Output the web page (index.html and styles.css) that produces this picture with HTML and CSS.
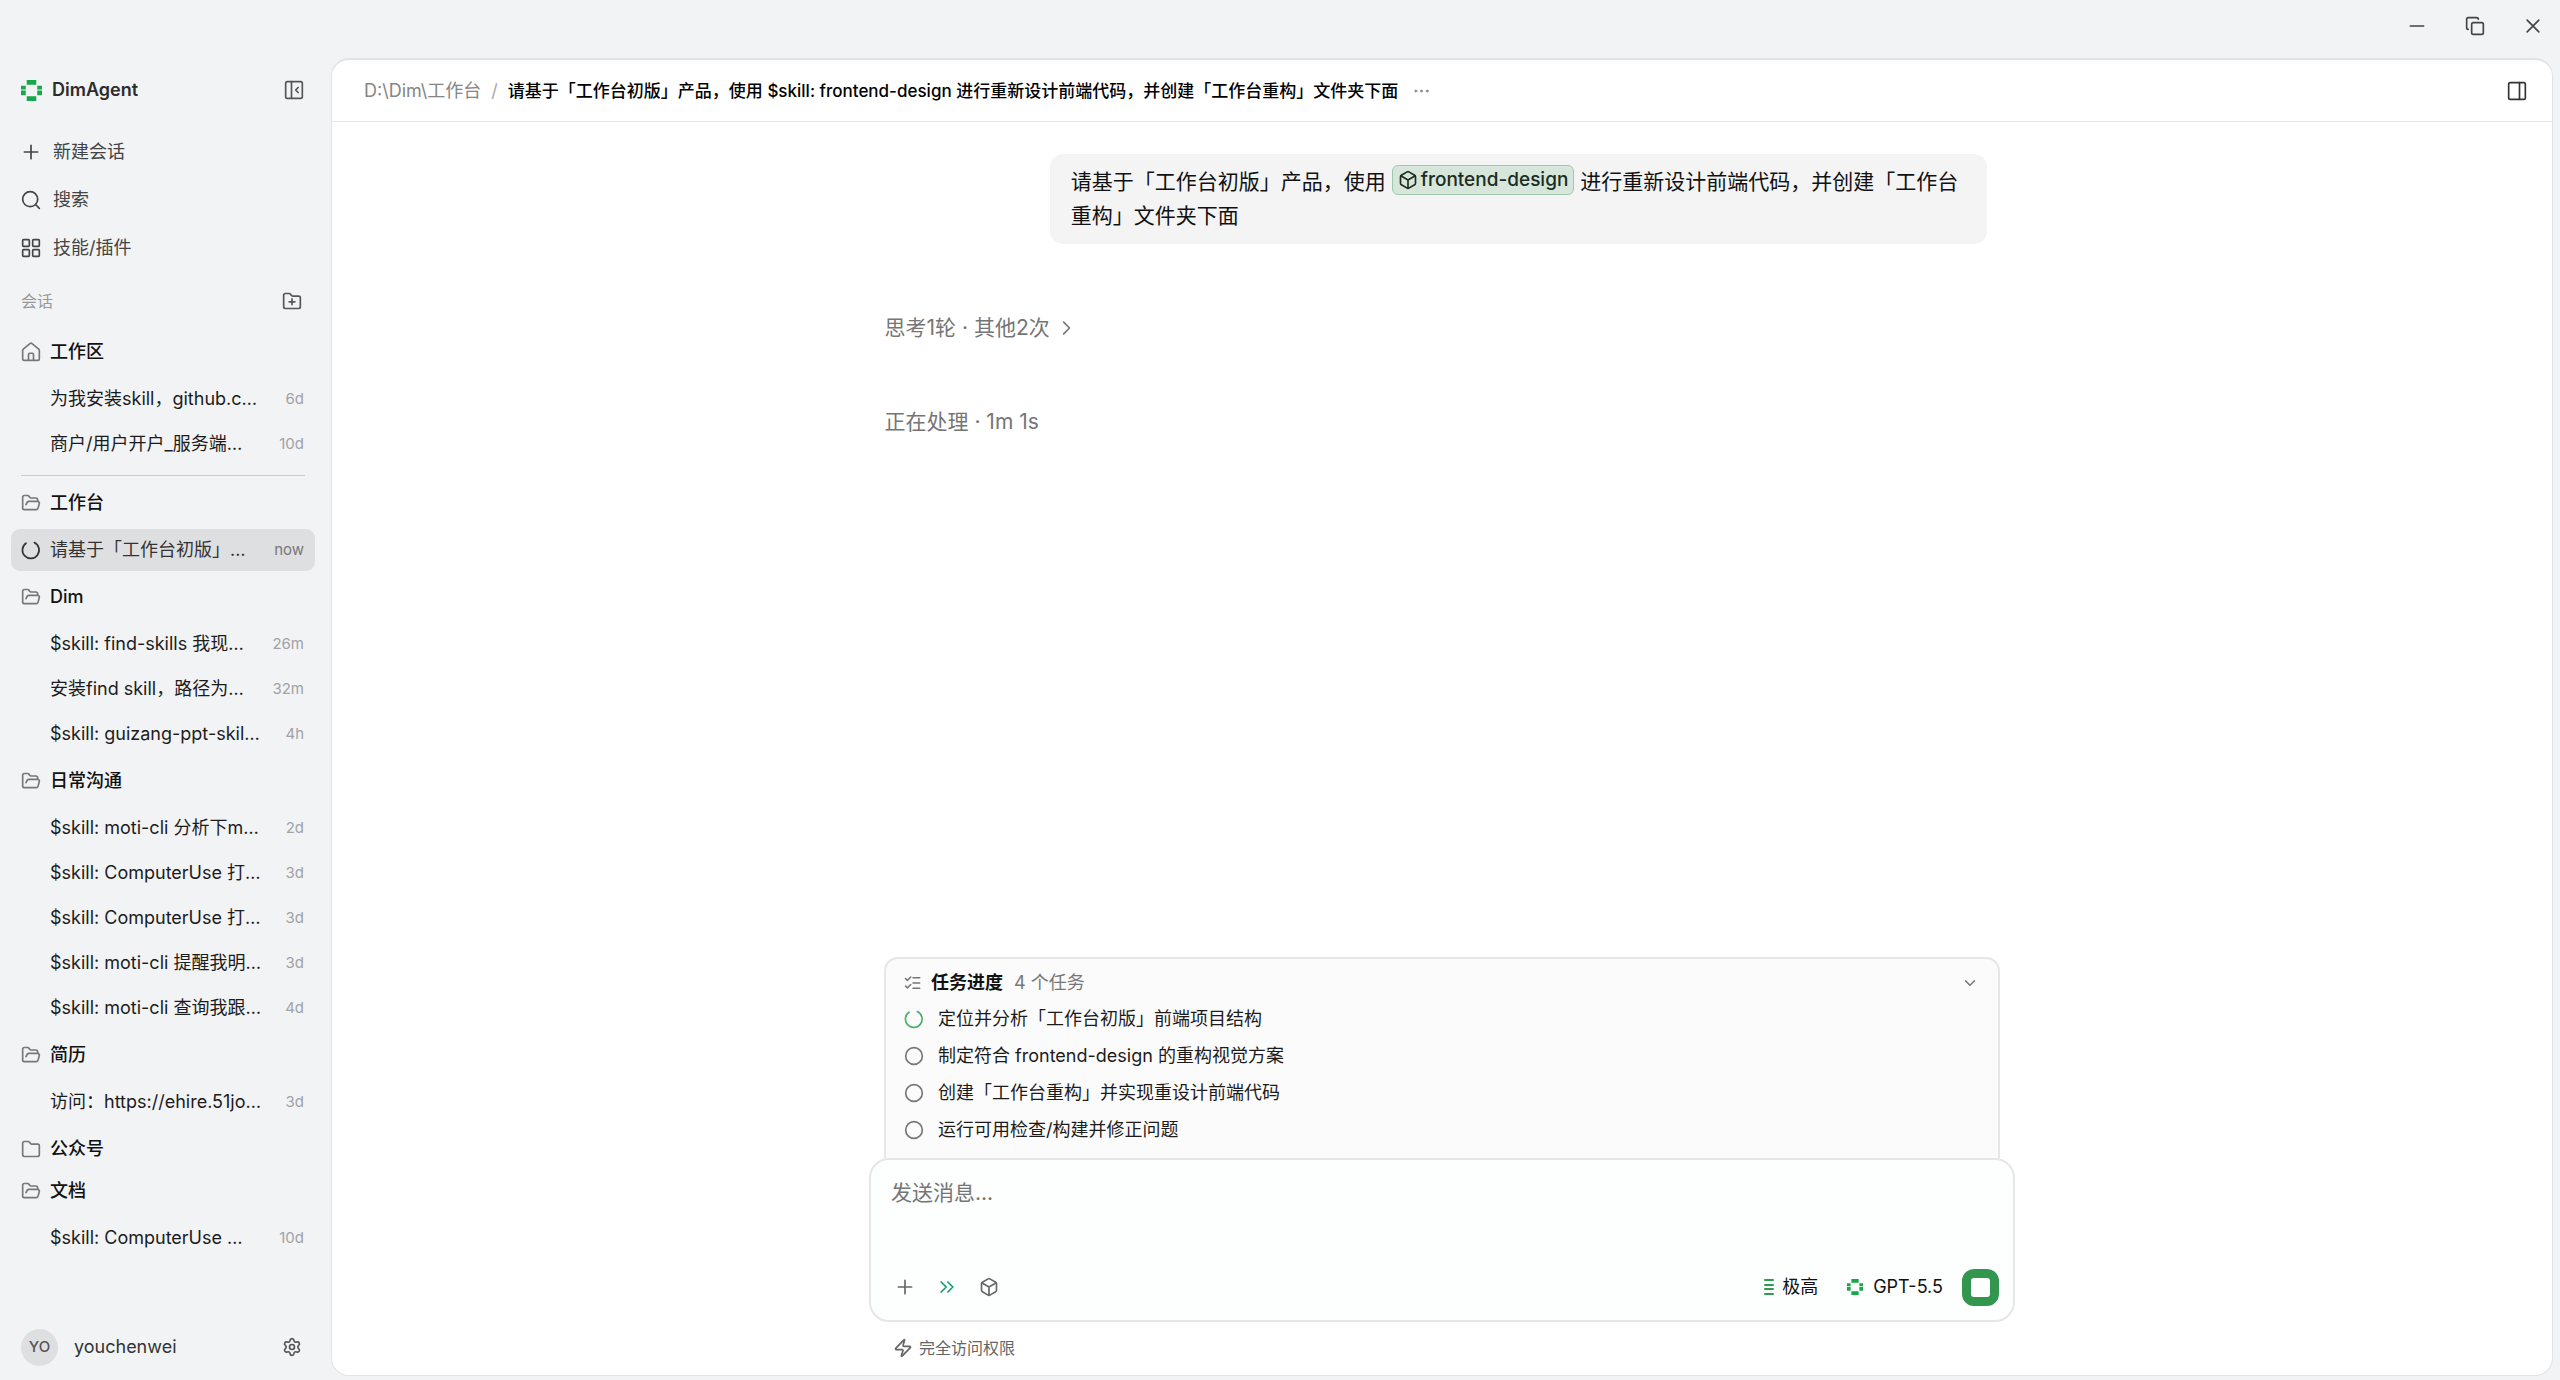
FILE: index.html
```html
<!DOCTYPE html>
<html lang="zh-CN">
<head>
    <meta charset="UTF-8">
    <meta name="viewport" content="width=device-width, initial-scale=1.0">
    <title>DimAgent</title>
    <link rel="stylesheet" href="styles.css">
</head>
<body>
    <!-- shared icons -->
    <svg class="sprite" aria-hidden="true">
        <symbol id="logo" viewBox="0 0 22 22">
            <path fill="#16a84a" d="M6 0h10v5H6zM6 17h10v5H6zM0 6h5v4H0zM0 11h5v5H0zM17 6h5v4h-5zM17 11h5v5h-5z"/>
        </symbol>
        <symbol id="plus" viewBox="0 0 24 24"><path d="M4 12h16M12 4v16"/></symbol>
        <symbol id="folder" viewBox="0 0 24 24">
            <path d="M2 19V5a2 2 0 0 1 2-2h4.6a2 2 0 0 1 1.7 1l.8 1.2a2 2 0 0 0 1.7.9H20a2 2 0 0 1 2 2V19a2 2 0 0 1-2 2H4a2 2 0 0 1-2-2z"/>
        </symbol>
        <symbol id="folder-open" viewBox="0 0 24 24">
            <path d="m6 14 1.5-2.9A2 2 0 0 1 9.24 10H20a2 2 0 0 1 1.94 2.5l-1.54 6a2 2 0 0 1-1.95 1.5H4a2 2 0 0 1-2-2V5a2 2 0 0 1 2-2h3.9a2 2 0 0 1 1.69.9l.81 1.2a2 2 0 0 0 1.67.9H18a2 2 0 0 1 2 2v2"/>
        </symbol>
        <symbol id="cube" viewBox="0 0 24 24">
            <path d="M21 8a2 2 0 0 0-1-1.73l-7-4a2 2 0 0 0-2 0l-7 4A2 2 0 0 0 3 8v8a2 2 0 0 0 1 1.73l7 4a2 2 0 0 0 2 0l7-4A2 2 0 0 0 21 16z"/>
            <path d="m3.3 7 8.7 5 8.7-5M12 22V12"/>
        </symbol>
        <symbol id="spinner" viewBox="0 0 24 24"><path d="M16 3.1A10 10 0 1 1 6 3.9"/></symbol>
        <symbol id="circle" viewBox="0 0 24 24"><circle cx="12" cy="12" r="10"/></symbol>
    </svg>

    <header class="titlebar">
        <button class="icon-btn" aria-label="最小化"><svg class="icon" viewBox="0 0 24 24"><path d="M4 12h16"/></svg></button>
        <button class="icon-btn" aria-label="还原"><svg class="icon" viewBox="0 0 24 24"><rect x="8" y="8" width="14" height="14" rx="2"/><path d="M4 16c-1.1 0-2-.9-2-2V4c0-1.1.9-2 2-2h10c1.1 0 2 .9 2 2"/></svg></button>
        <button class="icon-btn" aria-label="关闭"><svg class="icon" viewBox="0 0 24 24"><path d="M19 5 5 19M5 5l14 14"/></svg></button>
    </header>

    <div class="app">
        <aside class="sidebar">
            <div class="brand">
                <svg class="logo"><use href="#logo"/></svg>
                <span>DimAgent</span>
                <button class="icon-btn" aria-label="收起侧栏"><svg class="icon" viewBox="0 0 24 24"><rect x="2" y="2" width="20" height="20" rx="2"/><path d="M9 2v20M17 9l-3 3 3 3"/></svg></button>
            </div>

            <nav class="menu">
                <button><svg class="icon"><use href="#plus"/></svg>新建会话</button>
                <button><svg class="icon" viewBox="0 0 24 24"><circle cx="11" cy="11" r="9"/><path d="m22 22-4.6-4.6"/></svg>搜索</button>
                <button><svg class="icon" viewBox="0 0 24 24"><rect x="2" y="2" width="8" height="8" rx="1"/><rect x="14" y="2" width="8" height="8" rx="1"/><rect x="2" y="14" width="8" height="8" rx="1"/><rect x="14" y="14" width="8" height="8" rx="1"/></svg>技能/插件</button>
            </nav>

            <div class="section-title">
                <span>会话</span>
                <button class="icon-btn" aria-label="新建文件夹"><svg class="icon" viewBox="0 0 24 24"><use href="#folder"/><path d="M12 9.5v7M8.5 13h7"/></svg></button>
            </div>

            <div class="sessions">
                <h2 class="group"><svg class="icon" viewBox="0 0 24 24"><path d="M15 22v-7a1.500 1.500 0 0 0-1.500-1.500h-3A1.500 1.500 0 0 0 9 15v7M2 10a2 2 0 0 1 .7-1.500l8-6.500a2 2 0 0 1 2.600 0l8 6.500A2 2 0 0 1 22 10v10a2 2 0 0 1-2 2H4a2 2 0 0 1-2-2z"/></svg>工作区</h2>
                <ul>
                    <li><a href="#"><span>为我安装skill，github.c…</span><time>6d</time></a></li>
                    <li><a href="#"><span>商户/用户开户_服务端…</span><time>10d</time></a></li>
                </ul>
                <hr>

                <h2 class="group"><svg class="icon"><use href="#folder-open"/></svg>工作台</h2>
                <ul>
                    <li><a href="#" class="active"><svg class="icon"><use href="#spinner"/></svg><span>请基于「工作台初版」…</span><time>now</time></a></li>
                </ul>

                <h2 class="group"><svg class="icon"><use href="#folder-open"/></svg>Dim</h2>
                <ul>
                    <li><a href="#"><span>$skill: find-skills 我现…</span><time>26m</time></a></li>
                    <li><a href="#"><span>安装find skill，路径为…</span><time>32m</time></a></li>
                    <li><a href="#"><span>$skill: guizang-ppt-skil…</span><time>4h</time></a></li>
                </ul>

                <h2 class="group"><svg class="icon"><use href="#folder-open"/></svg>日常沟通</h2>
                <ul>
                    <li><a href="#"><span>$skill: moti-cli 分析下m…</span><time>2d</time></a></li>
                    <li><a href="#"><span>$skill: ComputerUse 打…</span><time>3d</time></a></li>
                    <li><a href="#"><span>$skill: ComputerUse 打…</span><time>3d</time></a></li>
                    <li><a href="#"><span>$skill: moti-cli 提醒我明…</span><time>3d</time></a></li>
                    <li><a href="#"><span>$skill: moti-cli 查询我跟…</span><time>4d</time></a></li>
                </ul>

                <h2 class="group"><svg class="icon"><use href="#folder-open"/></svg>简历</h2>
                <ul>
                    <li><a href="#"><span>访问：https://ehire.51jo…</span><time>3d</time></a></li>
                </ul>

                <h2 class="group"><svg class="icon"><use href="#folder"/></svg>公众号</h2>

                <h2 class="group"><svg class="icon"><use href="#folder-open"/></svg>文档</h2>
                <ul>
                    <li><a href="#"><span>$skill: ComputerUse …</span><time>10d</time></a></li>
                </ul>
            </div>

            <footer class="account">
                <span class="avatar">YO</span>
                <span>youchenwei</span>
                <button class="icon-btn" aria-label="设置"><svg class="icon" viewBox="0 0 24 24"><path d="M9.67 4.14a2.34 2.34 0 0 1 4.66 0 2.34 2.34 0 0 0 3.32 1.91 2.34 2.34 0 0 1 2.33 4.03 2.34 2.34 0 0 0 0 3.83 2.34 2.34 0 0 1-2.33 4.03 2.34 2.34 0 0 0-3.32 1.92 2.34 2.34 0 0 1-4.66 0 2.34 2.34 0 0 0-3.32-1.92 2.34 2.34 0 0 1-2.33-4.03 2.34 2.34 0 0 0 0-3.83 2.34 2.34 0 0 1 2.33-4.03 2.34 2.34 0 0 0 3.32-1.91"/><circle cx="12" cy="12" r="3"/></svg></button>
            </footer>
        </aside>

        <main class="panel">
            <header class="panel-header">
                <span class="path">D:\Dim\工作台</span>
                <span class="slash">/</span>
                <h1>请基于「工作台初版」产品，使用 $skill: frontend-design 进行重新设计前端代码，并创建「工作台重构」文件夹下面</h1>
                <button class="icon-btn more" aria-label="更多"><svg class="icon" viewBox="0 0 24 24"><circle cx="4" cy="12" r="1.5"/><circle cx="12" cy="12" r="1.5"/><circle cx="20" cy="12" r="1.5"/></svg></button>
                <button class="icon-btn toggle" aria-label="右侧面板"><svg class="icon" viewBox="0 0 24 24"><rect x="2" y="2" width="20" height="20" rx="2"/><path d="M15 2v20"/></svg></button>
            </header>

            <section class="chat">
                <div class="thread">
                    <p class="bubble">请基于「工作台初版」产品，使用 <span class="tag"><svg class="icon"><use href="#cube"/></svg>frontend-design</span> 进行重新设计前端代码，并创建「工作台重构」文件夹下面</p>
                    <button class="thinking">思考1轮 · 其他2次<svg class="icon" viewBox="0 0 24 24"><path d="m8 5 7 7-7 7"/></svg></button>
                    <p class="status">正在处理 · 1m 1s</p>
                </div>
            </section>

            <div class="dock">
                <section class="tasks">
                    <div class="tasks-head">
                        <svg class="icon" viewBox="0 0 24 24"><path d="M12 5h9M12 12h9M12 19h9M2 16l2.500 2.500L9 14M2 6l2.500 2.500L9 4"/></svg>
                        <h2>任务进度</h2>
                        <span>4 个任务</span>
                        <button class="icon-btn" aria-label="收起"><svg class="icon" viewBox="0 0 24 24"><path d="m6 9 6 6 6-6"/></svg></button>
                    </div>
                    <ul>
                        <li><svg class="icon running"><use href="#spinner"/></svg>定位并分析「工作台初版」前端项目结构</li>
                        <li><svg class="icon"><use href="#circle"/></svg>制定符合 frontend-design 的重构视觉方案</li>
                        <li><svg class="icon"><use href="#circle"/></svg>创建「工作台重构」并实现重设计前端代码</li>
                        <li><svg class="icon"><use href="#circle"/></svg>运行可用检查/构建并修正问题</li>
                    </ul>
                </section>

                <form class="composer">
                    <textarea aria-label="消息" placeholder="发送消息..."></textarea>
                    <div class="tools">
                        <button type="button" class="icon-btn" aria-label="添加"><svg class="icon"><use href="#plus"/></svg></button>
                        <button type="button" class="icon-btn fast" aria-label="快速模式"><svg class="icon" viewBox="0 0 24 24"><path d="m5 6 6 6-6 6M13 6l6 6-6 6"/></svg></button>
                        <button type="button" class="icon-btn" aria-label="技能"><svg class="icon"><use href="#cube"/></svg></button>
                        <button type="button" class="choice level"><svg viewBox="0 0 10 16"><path d="M1 1h8M1 6h8M1 10h8M1 15h8"/></svg>极高</button>
                        <button type="button" class="choice model"><svg><use href="#logo"/></svg>GPT-5.5</button>
                        <button type="button" class="stop" aria-label="停止"></button>
                    </div>
                </form>

                <button class="permission"><svg class="icon" viewBox="0 0 24 24"><path d="M4 14a1 1 0 0 1-.78-1.63l9.9-10.2a.5.5 0 0 1 .86.46l-1.92 6.02A1 1 0 0 0 13 10h7a1 1 0 0 1 .78 1.63l-9.9 10.2a.5.5 0 0 1-.86-.46l1.92-6.02A1 1 0 0 0 11 14z"/></svg>完全访问权限</button>
            </div>
        </main>
    </div>
</body>
</html>
```
FILE: styles.css
```css
* {
    box-sizing: border-box;
}

body {
    margin: 0;
    height: 100vh;
    display: flex;
    flex-direction: column;
    background: #f2f3f5;
    color: #1c1c1c;
    font-family: Inter, "Noto Sans CJK SC", sans-serif;
    font-size: 18px;
    line-height: 24px;
}

h1, h2, p, ul {
    margin: 0;
    padding: 0;
}

h1, h2 {
    font-weight: 500;
}

ul {
    list-style: none;
}

a {
    color: inherit;
    text-decoration: none;
}

button {
    padding: 0;
    border: none;
    background: none;
    color: inherit;
    font: inherit;
    cursor: pointer;
}

.sprite {
    display: none;
}

.icon {
    width: 20px;
    height: 20px;
    flex-shrink: 0;
    fill: none;
    stroke: currentColor;
    stroke-width: 2;
    stroke-linecap: round;
    stroke-linejoin: round;
}

.icon-btn {
    display: flex;
    align-items: center;
    justify-content: center;
}

/* window controls */
.titlebar {
    height: 58px;
    padding: 0 17px 6px 0;
    display: flex;
    align-items: center;
    justify-content: flex-end;
    gap: 38px;
    color: #444;
}

.app {
    flex: 1;
    min-height: 0;
    display: flex;
    padding: 0 7px 4px 0;
}

/* sidebar */
.sidebar {
    width: 331px;
    flex-shrink: 0;
    display: flex;
    flex-direction: column;
}

.brand {
    height: 64px;
    padding: 0 27px 0 21px;
    display: flex;
    align-items: center;
    gap: 10px;
    font-weight: 600;
    color: #2c2c2c;
}

.brand .icon-btn,
.section-title .icon-btn,
.account .icon-btn {
    margin-left: auto;
    color: #555;
}

.logo {
    width: 21px;
    height: 21px;
}

.menu {
    padding-top: 6px;
    color: #444;
}

.menu button {
    width: 100%;
    height: 48px;
    padding-left: 21px;
    display: flex;
    align-items: center;
    gap: 12px;
}

.section-title {
    height: 58px;
    padding: 0 29px 0 21px;
    display: flex;
    align-items: center;
    font-size: 16px;
    color: #999;
}

.sessions {
    flex: 1;
    min-height: 0;
    overflow: hidden;
    padding: 1px 16px 0 11px;
}

.group {
    height: 42px;
    padding-left: 10px;
    display: flex;
    align-items: center;
    gap: 9px;
    font-size: 18px;
    color: #111;
}

.group .icon {
    color: #777;
}

.sessions ul {
    padding: 5px 0;
    display: flex;
    flex-direction: column;
    gap: 3px;
}

.sessions a {
    height: 42px;
    padding: 0 11px 0 39px;
    display: flex;
    align-items: center;
    justify-content: space-between;
    border-radius: 9px;
    white-space: nowrap;
}

.sessions a.active {
    padding-left: 10px;
    gap: 9px;
    background: #dedfe1;
    color: #333;
}

.active time {
    margin-left: auto;
}

.sessions time {
    font-size: 15px;
    color: #a0a2a5;
}

.sessions .active time {
    color: #777;
}

.sessions hr {
    margin: 5px 10px 6px;
    border: none;
    border-top: 1px solid #c9cbcd;
}

.account {
    height: 58px;
    padding: 0 29px 0 21px;
    display: flex;
    align-items: center;
    gap: 16px;
    color: #333;
}

.avatar {
    width: 37px;
    height: 37px;
    display: flex;
    align-items: center;
    justify-content: center;
    border-radius: 50%;
    background: #dedfe1;
    color: #555;
    font-size: 15px;
    font-weight: 500;
}

/* main panel */
.panel {
    flex: 1;
    min-width: 0;
    display: flex;
    flex-direction: column;
    border: 1px solid #e2e3e4;
    border-top-width: 2px;
    border-radius: 18px;
    background: #fff;
}

.panel-header {
    height: 62px;
    flex-shrink: 0;
    padding: 0 25px 0 32px;
    display: flex;
    align-items: center;
    border-bottom: 1px solid #e2e3e4;
    white-space: nowrap;
}

.path {
    color: #858585;
}

.slash {
    padding: 0 10px;
    color: #aaa;
}

.panel-header h1 {
    font-size: 17px;
    color: #000;
}

.more {
    margin-left: 15px;
    color: #888;
}

.more .icon {
    width: 17px;
    fill: currentColor;
    stroke-width: 1;
}

.toggle {
    margin-left: auto;
    color: #333;
}

.chat {
    flex: 1;
    min-height: 0;
    padding: 32px 33px 0 20px;
}

.thread {
    max-width: 1102px;
    margin: 0 auto;
    display: flex;
    flex-direction: column;
    align-items: flex-start;
    font-size: 21px;
    line-height: 34px;
}

.bubble {
    max-width: 85%;
    align-self: flex-end;
    padding: 11px 21px;
    border-radius: 13px;
    background: #f4f4f4;
    color: #111;
}

.tag {
    height: 30px;
    padding: 0 5px;
    display: inline-flex;
    align-items: center;
    gap: 3px;
    vertical-align: top;
    border: 1px solid #9fcbab;
    border-radius: 6px;
    background: #d6e6da;
    color: #1d2b21;
    font-size: 19px;
    font-weight: 500;
}

.thinking {
    margin-top: 67px;
    display: flex;
    align-items: center;
    gap: 7px;
    color: #757575;
}

.status {
    margin-top: 60px;
    color: #757575;
}

/* tasks and composer */
.dock {
    width: 100%;
    max-width: 1186px;
    margin: 0 auto;
    padding: 0 20px 15px;
}

.tasks {
    margin: 0 15px;
    padding: 6px 19px 10px 18px;
    border: 2px solid #e6e6e6;
    border-bottom: none;
    border-radius: 14px 14px 0 0;
    background: #fbfbfb;
}

.tasks-head {
    height: 35px;
    display: flex;
    align-items: center;
    color: #777;
}

.tasks-head .icon {
    width: 18px;
    height: 18px;
}

.tasks-head h2 {
    margin: 0 11px 0 9px;
    font-size: 18px;
    font-weight: 600;
    color: #111;
}

.tasks-head .icon-btn {
    margin-left: auto;
}

.tasks li {
    height: 37px;
    display: flex;
    align-items: center;
    gap: 14px;
}

.tasks li .icon {
    color: #777;
}

.tasks li .running {
    color: #4caf6d;
}

.composer {
    padding: 16px 14px 14px 20px;
    border: 2px solid #e6e6e6;
    border-radius: 20px;
    background: #fdfefe;
}

.composer textarea {
    display: block;
    width: 100%;
    height: 92px;
    padding: 0;
    border: none;
    outline: none;
    resize: none;
    background: none;
    color: #111;
    font: inherit;
    font-size: 21px;
    line-height: 34px;
}

.composer textarea::placeholder {
    color: #757575;
}

.tools {
    height: 38px;
    display: flex;
    align-items: center;
    color: #666;
}

.tools .icon-btn {
    width: 42px;
    padding-left: 4px;
    justify-content: flex-start;
}

.tools .fast {
    color: #0f9d70;
}

.choice {
    display: flex;
    align-items: center;
    color: #111;
}

.level {
    margin-left: auto;
    gap: 8px;
}

.level svg {
    width: 10px;
    height: 16px;
    stroke: #2f9a50;
    stroke-width: 2;
    stroke-linecap: round;
}

.model {
    margin: 0 19px 0 29px;
    gap: 10px;
}

.model svg {
    width: 16px;
    height: 16px;
}

.stop {
    width: 37px;
    height: 37px;
    border: 9px solid #33964f;
    border-radius: 12px;
    background: #fff;
}

.permission {
    margin: 14px 0 0 24px;
    display: flex;
    align-items: center;
    gap: 6px;
    color: #666;
    font-size: 16px;
}
```
